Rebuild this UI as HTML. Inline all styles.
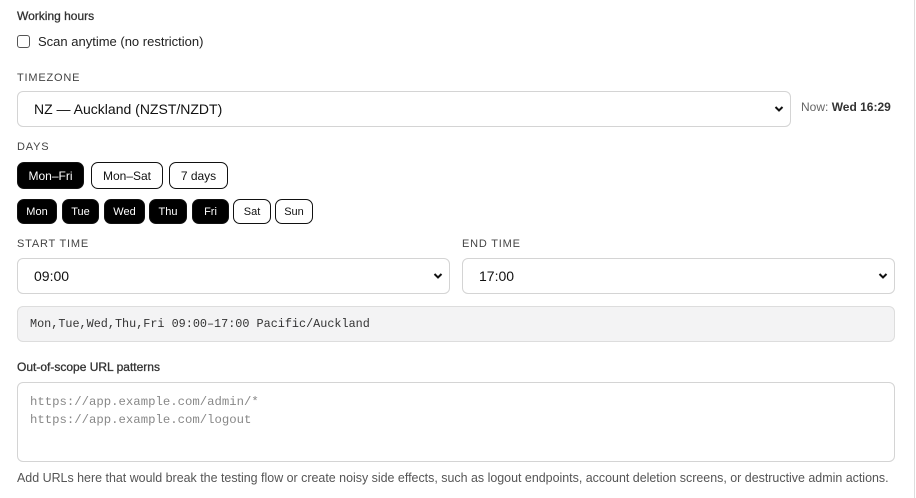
<!DOCTYPE html>
<html><head><style>
*{box-sizing:border-box;margin:0;padding:0}
body{width:916px;height:498px;background:#fff;font-family:"Liberation Sans",sans-serif;color:#111;position:relative;overflow:hidden}
.a{position:absolute;white-space:nowrap}
.lbl{font-size:11px;letter-spacing:.8px;color:#444}
.box{position:absolute;border:1px solid #d4d4d4;border-radius:6px;background:#fff}
.sel{font-size:14px;padding-left:16px;display:flex;align-items:center}
.chev{position:absolute;right:6px;top:50%;margin-top:-4px}
.pill{position:absolute;border:1px solid #111;border-radius:7px;font-size:12px;display:flex;align-items:center;justify-content:center;background:#fff;color:#111}
.on{background:#000;color:#fff}
.mono{font-family:"Liberation Mono",monospace}
</style></head><body>
<div class="a" style="left:17px;top:9px;font-size:12px;color:#333;-webkit-text-stroke:.3px #333">Working hours</div>
<div class="a" style="left:17px;top:35px;width:13px;height:13px;border:1px solid #555;border-radius:3px"></div>
<div class="a" style="left:38px;top:34px;font-size:13px;color:#222">Scan anytime (no restriction)</div>
<div class="a lbl" style="left:17px;top:72px">TIMEZONE</div>
<div class="box sel" style="left:17px;top:91px;width:774px;height:36px">NZ — Auckland (NZST/NZDT)<svg class="chev" width="10" height="8" viewBox="0 0 10 8"><path d="M1.5 2 5 5.5 8.5 2" stroke="#111" stroke-width="2" fill="none"/></svg></div>
<div class="a" style="left:801px;top:100px;font-size:12px;color:#666">Now: <b style="color:#333">Wed 16:29</b></div>
<div class="a lbl" style="left:17px;top:141px">DAYS</div>
<div class="pill on" style="left:17px;top:162px;width:67px;height:27px">Mon–Fri</div>
<div class="pill" style="left:91px;top:162px;width:72px;height:27px">Mon–Sat</div>
<div class="pill" style="left:169px;top:162px;width:59px;height:27px">7 days</div>
<div class="pill on" style="left:17px;top:199px;width:40px;height:25px;font-size:11px">Mon</div>
<div class="pill on" style="left:62px;top:199px;width:37px;height:25px;font-size:11px">Tue</div>
<div class="pill on" style="left:104px;top:199px;width:41px;height:25px;font-size:11px">Wed</div>
<div class="pill on" style="left:149px;top:199px;width:38px;height:25px;font-size:11px">Thu</div>
<div class="pill on" style="left:192px;top:199px;width:37px;height:25px;font-size:11px">Fri</div>
<div class="pill" style="left:233px;top:199px;width:38px;height:25px;font-size:11px">Sat</div>
<div class="pill" style="left:275px;top:199px;width:38px;height:25px;font-size:11px">Sun</div>
<div class="a lbl" style="left:17px;top:238px">START TIME</div>
<div class="a lbl" style="left:462px;top:238px">END TIME</div>
<div class="box sel" style="left:17px;top:258px;width:433px;height:36px">09:00<svg class="chev" width="10" height="8" viewBox="0 0 10 8"><path d="M1.5 2 5 5.5 8.5 2" stroke="#111" stroke-width="2" fill="none"/></svg></div>
<div class="box sel" style="left:462px;top:258px;width:433px;height:36px">17:00<svg class="chev" width="10" height="8" viewBox="0 0 10 8"><path d="M1.5 2 5 5.5 8.5 2" stroke="#111" stroke-width="2" fill="none"/></svg></div>
<div class="box mono" style="left:17px;top:306px;width:878px;height:36px;background:#f3f3f4;border-color:#ddd;font-size:11.8px;color:#333;padding:10px 0 0 12px">Mon,Tue,Wed,Thu,Fri 09:00–17:00 Pacific/Auckland</div>
<div class="a" style="left:17px;top:360px;font-size:12px;color:#333;-webkit-text-stroke:.3px #333">Out-of-scope URL patterns</div>
<div class="box mono" style="left:17px;top:382px;width:878px;height:80px;font-size:12.3px;color:#888;padding:10px 0 0 12px;line-height:18px">https://app.example.com/admin/*<br>https://app.example.com/logout</div>
<div class="a" style="left:17px;top:471px;font-size:12.45px;color:#555">Add URLs here that would break the testing flow or create noisy side effects, such as logout endpoints, account deletion screens, or destructive admin actions.</div>
<div class="a" style="left:914px;top:0;width:1px;height:498px;background:#ddd"></div>
</body></html>
